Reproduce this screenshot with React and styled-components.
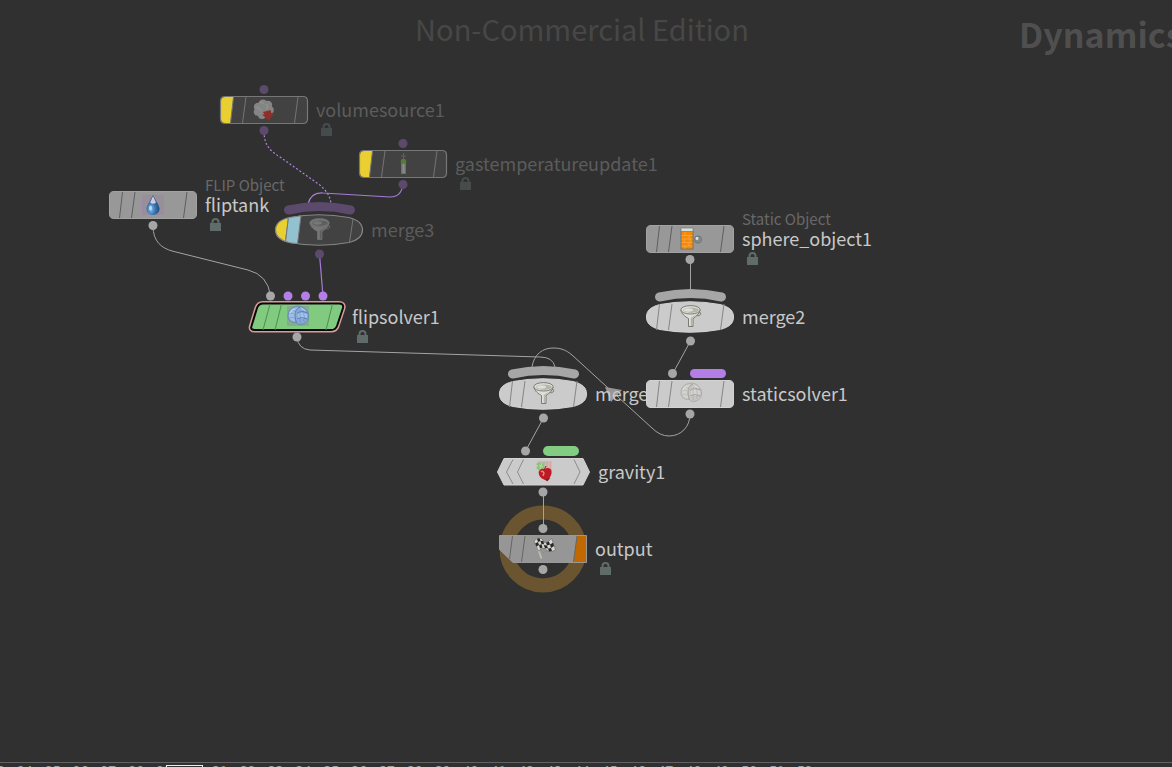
import React from "react";
import styled, { createGlobalStyle } from "styled-components";

const GlobalStyle = createGlobalStyle`
  * { box-sizing: border-box; }
  body {
    margin: 0;
    background: #303030;
    font-family: "Noto Sans CJK SC", "Noto Sans", sans-serif;
  }
`;

const Page = styled.div`
  display: flex;
  flex-direction: column;
  height: 100vh;
  overflow: hidden;
`;

const Canvas = styled.main`
  position: relative;
  flex: 1;
  min-height: 0;
  overflow: hidden;
`;

const Watermarks = styled.header`
  display: grid;
  grid-template-columns: minmax(0, 1fr) auto minmax(0, 1fr);
  align-items: start;
`;

const Edition = styled.p`
  grid-column: 2;
  margin: 0;
  padding-right: 8px;
  font-size: 29px;
  line-height: 56px;
  color: #474747;
  white-space: nowrap;
`;

const Context = styled.h1`
  justify-self: end;
  width: 153px;
  margin: 0;
  overflow: hidden;
  font-size: 34px;
  font-weight: 700;
  line-height: 68px;
  color: #4f4f4f;
  white-space: nowrap;
`;

const Wires = styled.svg`
  position: absolute;
  inset: 0;
  width: 100%;
  height: 100%;
  fill: none;
  stroke: #a3a3a3;
  stroke-width: 1;
`;

const NodeBox = styled.div`
  position: absolute;
  left: ${(p) => p.$x}px;
  top: ${(p) => p.$y}px;
  display: flex;
  align-items: center;
  gap: 8px;
  height: 60px;
  margin-top: -30px;
`;

const NodeButton = styled.button`
  display: block;
  width: ${(p) => p.$w}px;
  height: 28px;
  padding: 0;
  border: 0;
  background: none;

  svg {
    display: block;
    overflow: visible;
  }
`;

const Labels = styled.div`
  display: grid;
  grid-template-rows: 19px 20px 21px;
  white-space: nowrap;
`;

const Caption = styled.span`
  font-size: 15px;
  line-height: 19px;
  color: #686868;
`;

const Name = styled.span`
  grid-row: 2;
  font-size: 18px;
  line-height: 20px;
  color: ${(p) => (p.$dim ? "#5c5c5c" : "#c8c8c8")};
`;

const Lock = styled.svg`
  grid-row: 3;
  align-self: center;
  margin-left: 5px;
  fill: ${(p) => (p.$dim ? "#464c4b" : "#5f6c69")};
  stroke: none;
`;

const Timeline = styled.footer`
  position: relative;
  flex: none;
  height: 5px;
  border-top: 1px solid #646164;
  overflow: hidden;
`;

const Frames = styled.ol`
  display: flex;
  width: 836px;
  margin: 0 0 0 -17px;
  padding: 0;
  list-style: none;
  font-size: 14px;
  line-height: 14px;
  color: #a0a0a0;
`;

const Frame = styled.li`
  flex: 1;
  text-align: center;
`;

const FrameInput = styled.input`
  position: absolute;
  left: 166px;
  top: 2px;
  width: 37px;
  height: 22px;
  padding: 0;
  border: 1px solid #f0f0f0;
  background: #303030;
  color: #d0d0d0;
  font: inherit;
  text-align: center;
`;

const GREY = "#a6a6a6";
const PURPLE = "#b37ee6";
const DIM_PURPLE = "#5c4a6c";

const Port = ({ x, y, c = GREY }) => <circle cx={x} cy={y} r="4.5" fill={c} />;

const Slashes = ({ c }) => (
  <path d="M13.5 1 10.5 27M26 1 22.5 27M78 1 74.5 27" stroke={c} fill="none" />
);

const PLATE = "M5 .5H83Q87.5 .5 87.5 5V23Q87.5 27.5 83 27.5H5Q.5 27.5 .5 23V5Q.5 .5 5 .5Z";
const OVAL = "M14 1.5Q44-4 74 1.5C84 4 87.5 8 87.5 14S84 24 74 26.500Q44 32 14 26.500C4 24 .5 20 .5 14S4 4 14 1.500Z";

const Collar = ({ c }) => (
  <path d="M13.5-6Q44.500-13 75.500-6" stroke={c} strokeWidth="9" strokeLinecap="round" fill="none" />
);

/* Icons are drawn in a 22 x 22 box. */
const Funnel = ({ dim }) => {
  const a = dim ? "#777" : "#dedfd8";
  const b = dim ? "#5e5e5e" : "#b4b6ab";
  const s = dim ? "#6e6e6e" : "#6f7168";
  return (
    <g stroke={s} strokeWidth=".9">
      <path d="M17 8Q21.500 6 20.500 9.500Q19.500 11.500 15.500 10.500" fill="none" />
      <path d="M1 5C1.500 9 5 11.500 8.500 13.500V21.500H13V13.500C16 11.500 19.500 9 20 5Z" fill={a} />
      <path d="M10.800 13V21H12.500V13L18 8Z" fill={b} stroke="none" />
      <ellipse cx="10.500" cy="4.800" rx="9.700" ry="4.200" fill={a} />
      <ellipse cx="11" cy="5.200" rx="7.800" ry="2.700" fill={b} stroke="none" />
      <ellipse cx="8.500" cy="5" rx="4.500" ry="1.700" fill={a} stroke="none" />
    </g>
  );
};

const Brain = ({ blue }) => {
  const a = blue ? "#a3c1e6" : "#d3d2cf";
  const b = blue ? "#86a9d8" : "#c6c5c2";
  const s = blue ? "#5078b2" : "#9d9c98";
  return (
    <g>
      {blue && <rect x="0" y="1" width="22" height="20" fill="#86a48c" opacity=".75" />}
      <path d="M1 11C1 6 4 2 9 1.500C14 0 19 3 21 8C22.500 13 21 17 17 18.500C14 20.500 11 19.500 9.500 17.500C4 18 1 15 1 11Z" fill={b} stroke={s} strokeWidth=".6" />
      <path d="M2 10.500C2 6 6 2.500 12 2.500C9 5 7 8 8 16C4 16 2 14 2 10.500Z" fill={a} />
      <path d="M10.500 8.500Q15 6 20 9Q20.500 12 19 14L11 13.500Z" fill={a} />
      <path d="M13 2C8 4 6.500 10 9.500 17.500M10 8.500Q14 5 20.500 8M10.500 13.500Q15 11.500 20.500 14" fill="none" stroke={s} strokeWidth=".9" />
      <path d="M3 9Q5 7 7 9M2.500 13Q5 11 7.500 13.500M5.500 5Q7 7 8.500 6M13 8Q12 10 14 13M17 7Q16 10 18 13M13 13Q12.500 16 14 18.500M17 13Q16 16 17.500 17" fill="none" stroke={s} strokeWidth=".6" opacity=".7" />
      <path d="M14 3.500Q17 4.500 18.500 6M3 8Q4 5 7 4" fill="none" stroke="#eef3f8" strokeWidth=".8" opacity=".7" />
    </g>
  );
};

const Smoke = () => (
  <g>
    <g fill="#858585">
      <circle cx="10" cy="5" r="4.500" /><circle cx="5" cy="8" r="4.200" />
      <circle cx="15" cy="6" r="4.200" /><circle cx="4.500" cy="13" r="3.800" />
      <circle cx="17" cy="11" r="3.800" /><circle cx="9" cy="16" r="4" />
      <circle cx="10" cy="10" r="7" />
    </g>
    <path d="M6 4Q9 2 11 5M3 9Q7 8 8 12M13 5Q16 7 14 10" fill="none" stroke="#969696" strokeWidth="1" />
    <path d="M10 13 17.500 11 18.500 14.500H21.500L15.500 21.500 9 15.500 11.500 15.500Z" fill="#8e3029" />
  </g>
);

const Thermometer = () => (
  <g>
    <path d="M11.500 0V6M9 3H14" stroke="#59635a" fill="none" />
    <circle cx="11.500" cy="8.500" r="2.800" fill="#547b38" />
    <rect x="9" y="10" width="5" height="11" fill="#6c726b" />
    <path d="M11.500 11V20" stroke="#8b908a" strokeWidth="2" />
  </g>
);

const Drop = () => (
  <g>
    <defs>
      <radialGradient id="drop" cx=".35" cy=".7" r=".7">
        <stop offset="0" stopColor="#84bce9" />
        <stop offset=".45" stopColor="#3b76b4" />
        <stop offset="1" stopColor="#1c4676" />
      </radialGradient>
    </defs>
    <rect x=".5" y="1.500" width="21" height="19" fill="#989098" stroke="#a285ab" strokeWidth=".7" />
    <path d="M11 1C13 6 17 10 17.500 14.500C17.500 18.500 14.500 21 11 21S4.500 18.500 4.500 14.500C5 10 9 6 11 1Z" fill="url(#drop)" />
    <path d="M11 2 14 8.500Q11 11 8.200 8.500Z" fill="#d0cbe2" />
    <ellipse cx="8.500" cy="14" rx="1.500" ry="2.500" fill="#b4dcf4" />
  </g>
);

const Bricks = () => (
  <g>
    <rect x="2" y="3" width="12" height="18" fill="#f48a0a" stroke="#6e7370" />
    <path d="M2.500 7.500H13.500M2.500 11H13.500M2.500 14.500H13.500M2.500 18H13.500M6 4V7.500M10 7.500V11M5 11V14.500M10 14.500V18M6 18V21M11 11V14.500" stroke="#ffb252" strokeWidth=".6" />
    <rect x="2" y="0" width="12" height="3.500" fill="#d8dfd7" stroke="#777d76" strokeWidth=".7" />
    <circle cx="19" cy="11.500" r="3.700" fill="#82898b" stroke="#62696b" strokeWidth=".6" />
    <circle cx="18" cy="10.500" r="1.400" fill="#e2e8e9" />
  </g>
);

const Apple = () => (
  <g>
    <path d="M5 1H18.500V13H5Z" fill="#e26767" opacity=".2" />
    <path d="M14 1V11M17.500 1V12" stroke="#e79a9a" strokeWidth="1.500" opacity=".6" />
    <path d="M3 4Q6 1 9 3L12 2 11 7 12 10 6 10 3 8 5 6Z" fill="#8cc47a" />
    <path d="M6 5 10 7M9 3 7 9" stroke="#b4dda6" />
    <path d="M11.500 9.500C13 7.500 16 7.500 18 9.500C19.500 13 18 17 14 21L9 18.500C4.500 15 5 10 8.500 9Q10.500 8.500 11.500 9.500Z" fill="#bd1a24" />
    <path d="M8 12Q9.500 10 11 13L10 16" stroke="#ec7f7f" strokeWidth="1.500" fill="none" />
    <path d="M13 19 17.500 18 14 21.500Z" fill="#7d2222" />
    <path d="M11 10 13 6" stroke="#65321e" />
  </g>
);

const Flags = () => (
  <g>
    <path d="M1.500 5 7.500 21.500" stroke="#bdbdb6" strokeWidth="1.800" />
    <path d="M20 9 9 16" stroke="#8d8d86" />
    <path d="M0 4Q3 0 8 1.500L12 11.500Q8 10 4.500 14Z" fill="#d8d8d2" stroke="#555" strokeWidth=".5" />
    <path d="M9 5Q13 7 17.500 1.500L21.500 12.500Q16 17 11.500 12Z" fill="#d8d8d2" stroke="#555" strokeWidth=".5" />
    <path d="M3 1.800 5.500 1.200 6.500 4 4 5ZM1.200 6.500 4 5 5 8 2.500 9.500ZM6.500 4 9 4 10 7 7.500 7.200ZM5 8 7.500 7.200 8.500 10.500 6 11.500ZM12 5.800 15 4.500 16 7.500 13 8.500ZM10 8 13 8.500 14 11.500 11 11ZM16 7.500 19 5.800 20 9 17 11ZM14 11.500 17 11 18 14 15 14.500Z" fill="#272727" />
  </g>
);

const Icon = ({ x = 33, y = 3, children }) => <g transform={`translate(${x} ${y})`}>{children}</g>;

const BypassedPlate = ({ icon }) => (
  <>
    <path d={PLATE} fill="#424242" />
    <path d="M5 1H13.500L10.500 27H5Q1 27 1 23V5Q1 1 5 1Z" fill="#e9cf30" />
    <Slashes c="#747474" />
    <path d={PLATE} fill="none" stroke="#777" strokeWidth="1.200" />
    <Icon>{icon}</Icon>
    <Port x={44} y={-6.5} c={DIM_PURPLE} />
    <Port x={44} y={34.5} c={DIM_PURPLE} />
  </>
);

const ObjectPlate = ({ icon }) => (
  <>
    <path d={PLATE} fill="#989898" stroke="#a2a2a2" />
    <Slashes c="#5e5e5e" />
    <Icon>{icon}</Icon>
    <Port x={44} y={34.500} />
  </>
);

const MergeOval = () => (
  <>
    <Collar c={GREY} />
    <path d={OVAL} fill="#cbcbcb" stroke="#d3d3d3" />
    <Slashes c="#858585" />
    <Icon x={34} y={2}><Funnel /></Icon>
    <Port x={44.500} y={38} />
  </>
);

const BypassedMerge = () => (
  <>
    <Collar c={DIM_PURPLE} />
    <path d={OVAL} fill="#424242" />
    <path d="M13 2 10 25.500C3 23 .5 19 .5 14S4 4 13 2Z" fill="#e9cf30" />
    <path d="M13 2Q19 0 26-.500L22.500 28Q16 27.500 10 25.500Z" fill="#93c1d0" />
    <path d="M13.500 1 10.500 26M26 0 22.500 28M78 3 74.500 26" stroke="#747474" fill="none" />
    <path d={OVAL} fill="none" stroke="#858585" strokeWidth="1.200" />
    <Icon x={34} y={2}><Funnel dim /></Icon>
    <Port x={44.500} y={38} c={DIM_PURPLE} />
  </>
);

const SELECTED = "M14 .5H90Q95 .5 94 5L88 23Q86.500 27 82 27H6Q1 27 2.500 23L8 5Q9.500 .5 14 .5Z";

const SelectedSolver = () => (
  <>
    <path d={SELECTED} fill="none" stroke="#d99c98" strokeWidth="5" />
    <path d={SELECTED} fill="#80cb80" stroke="#080808" strokeWidth="2" />
    <path d="M21 1 14 27M32.500 1 26 27M83.500 1 77 27" stroke="#528c52" fill="none" />
    <Icon x={38} y={2}><Brain blue /></Icon>
    <Port x={21.500} y={-7} />
    <Port x={39} y={-7} c={PURPLE} />
    <Port x={56.500} y={-7} c={PURPLE} />
    <Port x={74} y={-7} c={PURPLE} />
    <Port x={48} y={34} />
  </>
);

const Solver = () => (
  <>
    <path d={PLATE} fill="#cbcbcb" stroke="#d3d3d3" />
    <Slashes c="#858585" />
    <Icon x={34} y={2}><Brain /></Icon>
    <Port x={26.500} y={-6.500} />
    <rect x="44" y="-11" width="36" height="9" rx="4.500" fill={PURPLE} />
    <Port x={44} y={34} />
  </>
);

const Gravity = () => (
  <>
    <path d="M7 .5H86L92.500 14 86 27H7L.5 14Z" fill="#cbcbcb" stroke="#d3d3d3" />
    <path d="M16 1.500 9.500 14 16 26M26.500 1.500 20.500 14 26.500 26M77 1.500 83 14 77 26" stroke="#8c8c8c" fill="none" />
    <Icon x={36} y={2}><Apple /></Icon>
    <Port x={28.500} y={-7} />
    <rect x="46" y="-12" width="36" height="10" rx="5" fill="#82cd82" />
    <Port x={46} y={34} />
  </>
);

const Output = () => (
  <>
    <path d="M.5 .5H87.500V27.500H14L.5 14.500Z" fill="#969696" stroke="#999" />
    <path d="M78 1H87V27H74.500Z" fill="#c26800" />
    <path d="M13.500 1 10.500 24M26 1 22.500 27M78 1 74.500 27" stroke="#666" fill="none" />
    <Icon x={35} y={2}><Flags /></Icon>
    <Port x={44} y={-6.500} />
    <Port x={44} y={34.500} />
  </>
);

/* x is the left edge of the body, y its vertical centre. */
const NODES = [
  { name: "volumesource1", x: 220, y: 110, dim: true, lock: true, body: <BypassedPlate icon={<Smoke />} /> },
  { name: "gastemperatureupdate1", x: 359, y: 164, dim: true, lock: true, body: <BypassedPlate icon={<Thermometer />} /> },
  { name: "fliptank", caption: "FLIP Object", x: 109, y: 205, lock: true, body: <ObjectPlate icon={<Drop />} /> },
  { name: "merge3", x: 275, y: 230, dim: true, body: <BypassedMerge /> },
  { name: "flipsolver1", x: 249, y: 317, w: 95, lock: true, body: <SelectedSolver /> },
  { name: "merge1", x: 499, y: 394, body: <MergeOval /> },
  { name: "sphere_object1", caption: "Static Object", x: 646, y: 239, lock: true, body: <ObjectPlate icon={<Bricks />} /> },
  { name: "merge2", x: 646, y: 317, body: <MergeOval /> },
  { name: "staticsolver1", x: 646, y: 394, body: <Solver /> },
  { name: "gravity1", x: 497, y: 472, w: 93, body: <Gravity /> },
  { name: "output", x: 499, y: 549, lock: true, body: <Output /> },
];

const FRAMES = Array.from({ length: 30 }, (_, i) => 23 + i);

function Node({ name, caption, x, y, w = 88, dim, lock, body }) {
  return (
    <NodeBox $x={x} $y={y}>
      <NodeButton type="button" $w={w} aria-label={name}>
        <svg width={w} height="28">{body}</svg>
      </NodeButton>
      <Labels>
        {caption && <Caption>{caption}</Caption>}
        <Name $dim={dim}>{name}</Name>
        {lock && (
          <Lock $dim={dim} width="11" height="13" viewBox="0 0 11 13">
            <path d="M0 5H1.500V4A4 4 0 0 1 9.500 4V5H11V13H0ZM3.500 5H7.500V4A2 2 0 0 0 3.500 4Z" fillRule="evenodd" />
          </Lock>
        )}
      </Labels>
    </NodeBox>
  );
}

export default function App() {
  return (
    <Page>
      <GlobalStyle />
      <Canvas>
        <Watermarks>
          <Edition>Non-Commercial Edition</Edition>
          <Context>Dynamics</Context>
        </Watermarks>
        <Wires aria-hidden="true">
          <circle cx="543" cy="549" r="36.500" stroke="#6b5530" strokeWidth="14" />
          <path d="M153 226C153 242 162 248 172 251L248 270Q268 275 270.500 296" />
          <path d="M264 131C264 145 270 151 280 157L317 183Q330 192 331 204" stroke="#b184e0" strokeWidth="1.200" strokeDasharray="2 2" />
          <path d="M403 185Q401 197 390 197L323 193Q311 192 308 204" stroke="#a77bd3" strokeWidth="1.200" />
          <path d="M319.500 254 323 296" stroke="#a77bd3" strokeWidth="1.200" />
          <path d="M297 337Q298 349 310 350L540 357Q553 357 555 367" />
          <path d="M532 367C534 354 543 348 553 348C561 348 566 350 572 355L652 428Q660 436 669 436C681 436 690 427 690 414" />
          <path d="M605 387 622 390 611 402Z" fill="#969696" stroke="none" />
          <path d="M690.500 259V290M690.500 341 673 373M543.500 418 525.500 451M543.500 492V529" />
        </Wires>
        {NODES.map((node) => (
          <Node key={node.name} {...node} />
        ))}
      </Canvas>
      <Timeline>
        <Frames>
          {FRAMES.map((f) => (
            <Frame key={f}>{f}</Frame>
          ))}
        </Frames>
        <FrameInput aria-label="Current frame" defaultValue="30" />
      </Timeline>
    </Page>
  );
}
